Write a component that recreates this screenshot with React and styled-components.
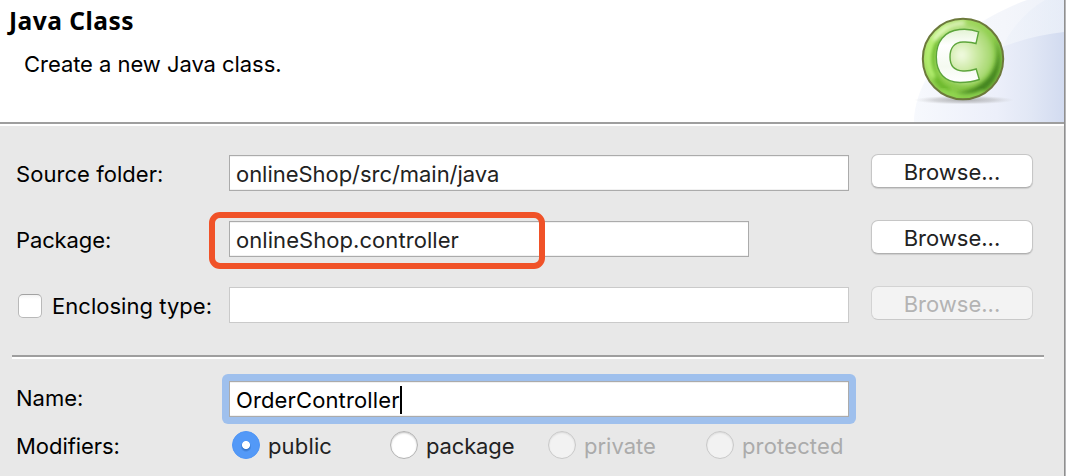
import React from "react";
import styled, { createGlobalStyle, css } from "styled-components";

const Global = createGlobalStyle`
  * { box-sizing: border-box; }
  body { margin: 0; background: #e8e8e8; overflow: hidden; }
`;

const Dialog = styled.main`
  width: 1066px;
  height: 476px;
  display: grid;
  grid-template-rows: 126px 229px 4px 117px;
  grid-template-columns: 1064px 2px;
  background: #e8e8e8;
  font-family: Inter, "Liberation Sans", sans-serif;
  font-size: 22px;
  line-height: 28px;
  color: #000;
`;

const WindowEdge = styled.div`
  grid-column: 2;
  grid-row: 1 / -1;
  background: linear-gradient(90deg, #8f8f8f 50%, #b7b7b9 50%);
`;

const Header = styled.header`
  display: flex;
  justify-content: space-between;
  background: #fff;
  border-bottom: 2px solid #fff;
  box-shadow: inset 0 -2px #9e9e9e;
`;

const Headings = styled.div`
  padding: 7px 0 0 8px;
`;

const Text = styled.span`
  display: block;
  white-space: nowrap;
  letter-spacing: ${(p) => p.$track || 0}px;
`;

const Title = styled.h1`
  margin: 0 0 0 1px;
  font: bold 24.5px/28px "Noto Sans", sans-serif;
  letter-spacing: 0.5px;
`;

const Subtitle = styled(Text)`
  margin: 15px 0 0 16px;
`;

const Banner = styled.svg`
  display: block;
  width: 160px;
  height: 122px;
`;

const Fields = styled.section`
  padding: 28px 31px 0 16px;
  display: grid;
  grid-template-columns: 213px 620px 162px;
  grid-auto-rows: 38px;
  row-gap: 28px;
  justify-content: start;
`;

const Label = styled.label`
  display: flex;
  align-items: center;
  gap: 10px;
  padding-top: 2px;
  height: 38px;
`;

const CheckBox = styled.span`
  width: 24px;
  height: 24px;
  margin-left: 2px;
  border-radius: 5px;
  border: 1px solid #b9b9b9;
  border-top-color: #a2a2a2;
  background: linear-gradient(#f3f3f3, #fff 4px);
`;

const Input = styled.div`
  display: flex;
  align-items: center;
  width: ${(p) => p.$width || 620}px;
  height: 36px;
  margin-top: 1px;
  padding: 1px 0 0 6px;
  border: 1px solid ${(p) => (p.$disabled ? "#cacaca" : "#ababab")};
  background: #fff;
  color: ${(p) => (p.$focused ? "#000" : "#222")};
  ${(p) => !p.$disabled && css`box-shadow: inset 0 1px #f1f1f1, inset 0 -1px #f1f1f1;`}
`;

const FocusRing = styled.div`
  width: 634px;
  height: 50px;
  padding: 7px;
  border-radius: 6px;
  background: #9fc0ed;
  ${Input} {
    margin: 0;
  }
`;

const Caret = styled.span`
  width: 2px;
  height: 28px;
  background: #000;
`;

const Highlighted = styled.div`
  position: relative;
`;

const Highlight = styled.span`
  position: absolute;
  left: -20px;
  top: -8px;
  width: 336px;
  height: 57px;
  border: 6px solid #f05228;
  border-radius: 11px;
`;

const Button = styled.button`
  justify-self: end;
  margin: 0 -22px 0 0;
  width: 162px;
  height: 34px;
  padding: 1px 0 0;
  display: flex;
  align-items: center;
  justify-content: center;
  border: 1px solid #c6c6c6;
  border-bottom-color: #b0b0b0;
  border-radius: 7px;
  background: #fff;
  box-shadow: 0 1px 1px rgba(0, 0, 0, 0.12);
  font: inherit;
  color: #222;
  &:disabled {
    background: #f3f3f3;
    color: #b3b3b3;
    border-color: #d3d3d3;
    border-bottom-color: #c9c9c9;
    box-shadow: none;
  }
`;

const Rule = styled.div`
  margin: 0 20px 0 12px;
  background: linear-gradient(#9e9e9e 50%, #fff 50%);
`;

const Details = styled.section`
  display: grid;
  grid-template-columns: 206px 634px;
  grid-template-rows: 50px 42px;
  padding: 15px 0 0 16px;
`;

const DetailLabel = styled(Text)`
  align-self: center;
  padding: ${(p) => p.$drop || 0}px 0 ${(p) => p.$lift || 0}px;
`;

const Radios = styled.div`
  display: grid;
  grid-template-columns: repeat(4, 158px);
  align-items: center;
  padding-left: 10px;
`;

const Option = styled.label`
  display: flex;
  align-items: center;
  gap: 8px;
  color: ${(p) => (p.$disabled ? "#ababab" : "#222")};
  ${Text} {
    padding-top: 2px;
  }
`;

const Circle = styled.span`
  width: 28px;
  height: 28px;
  flex: none;
  border-radius: 50%;
  border: 1px solid ${(p) => (p.$disabled ? "#c9c9c9" : "#b3b3b3")};
  background: ${(p) => (p.$disabled ? "#f2f2f2" : "#fff")};
  box-shadow: inset 0 1px 2px rgba(0, 0, 0, ${(p) => (p.$disabled ? 0.1 : 0.24)});
  ${(p) => p.$checked && css`
    border-color: #4f95f5;
    background: radial-gradient(circle at 50% 50%, #fff 0 3.6px, transparent 4.4px),
      radial-gradient(circle at 50% 56%, #3878ce 0 3.5px, transparent 5.5px), #5399f7;
    box-shadow: none;
  `}
`;

function ClassBanner() {
  return (
    <Banner viewBox="904 0 160 122" aria-hidden="true">
      <defs>
        <linearGradient id="outer" gradientUnits="userSpaceOnUse" x1="914" x2="1064" y1="0" y2="0">
          <stop offset="0" stopColor="#f7f9fd" />
          <stop offset=".6" stopColor="#f4f6fb" />
          <stop offset="1" stopColor="#edf1f9" />
        </linearGradient>
        <linearGradient id="mid" gradientUnits="userSpaceOnUse" x1="1000" x2="1064" y1="0" y2="0">
          <stop offset="0" stopColor="#eff3fa" />
          <stop offset="1" stopColor="#e2e9f6" />
        </linearGradient>
        <linearGradient id="inner" gradientUnits="userSpaceOnUse" x1="914" x2="1064" y1="0" y2="0">
          <stop offset="0" stopColor="#f7f9fd" />
          <stop offset=".55" stopColor="#eceffa" />
          <stop offset=".78" stopColor="#e1e7f5" />
          <stop offset="1" stopColor="#d2dbf0" />
        </linearGradient>
        <linearGradient id="ball" x1="0" y1="0" x2="1" y2="1">
          <stop offset="0" stopColor="#daf4b0" />
          <stop offset=".22" stopColor="#a5db62" />
          <stop offset=".6" stopColor="#8bcb4b" />
          <stop offset="1" stopColor="#76b93a" />
        </linearGradient>
        <radialGradient id="glow" cx=".42" cy=".5" r=".58">
          <stop offset="0" stopColor="#f4fce6" />
          <stop offset=".42" stopColor="#d0ebaa" />
          <stop offset="1" stopColor="#a0d566" />
        </radialGradient>
        <linearGradient id="letter" x1="0" y1="0" x2="0" y2="1">
          <stop offset="0" stopColor="#e3f3d4" />
          <stop offset=".3" stopColor="#fff" />
          <stop offset=".7" stopColor="#f5faf0" />
          <stop offset="1" stopColor="#fff" />
        </linearGradient>
        <radialGradient id="shadow">
          <stop offset="0" stopColor="#888" stopOpacity=".65" />
          <stop offset=".6" stopColor="#999" stopOpacity=".35" />
          <stop offset="1" stopColor="#bbb" stopOpacity="0" />
        </radialGradient>
        <filter id="soft" x="-30%" y="-30%" width="160%" height="160%">
          <feGaussianBlur stdDeviation="2" />
        </filter>
        <clipPath id="disc"><circle cx="963" cy="59" r="40" /></clipPath>
      </defs>
      <path d="M914 122C915 70 965 22 1027 0H1064V122Z" fill="url(#outer)" />
      <path d="M1000 52C1010 29 1025 12 1045 0H1064V122H1000Z" fill="url(#mid)" opacity=".6" />
      <path d="M914 122C915 106 919 94 925 84C958 68 1004 38 1064 32V122Z" fill="url(#inner)" />
      <ellipse cx="964" cy="100" rx="50" ry="4.5" fill="url(#shadow)" />
      <circle cx="963" cy="59" r="40.2" fill="url(#ball)" />
      <g clipPath="url(#disc)">
        <path d="M995 38C1003 66 988 89 955 94C993 103 1009 66 995 38Z" fill="#3f811f" filter="url(#soft)" />
        <path d="M941 37C925 57 932 83 950 91" fill="none" stroke="#66b528" strokeWidth="5" filter="url(#soft)" />
        <path d="M934 78C922 58 930 34 948 26" fill="none" stroke="#bcf578" strokeWidth="5" filter="url(#soft)" />
        <ellipse cx="966" cy="55" rx="28" ry="30" fill="url(#glow)" filter="url(#soft)" />
        <path d="M934 40Q946 23 965 23" fill="none" stroke="#f1fbd9" strokeWidth="3.5" filter="url(#soft)" />
        <path d="M941 90Q962 102 984 92" fill="none" stroke="#95dc55" strokeWidth="4" filter="url(#soft)" />
      </g>
      <circle cx="963" cy="59" r="40.2" fill="none" stroke="#6c793b" strokeWidth="2" />
      <path
        d="M978.6 31.8C973 29.6 966 28.8 959.500 29.5C944 31 936.300 42 936.300 57C936.300 73 945 82.500 960 82.500C967 82.500 974 81.500 979.300 79.500L976.200 69C971.500 70.600 967 71.300 963 71C954 70.500 950 65 950 57C950 48 954.500 42.300 963 42C968 41.800 972 42 976 43.500Z"
        fill="url(#letter)"
        stroke="#5da53b"
        strokeWidth="1.4"
      />
    </Banner>
  );
}

const options = [
  { name: "public", track: 0.15, checked: true },
  { name: "package", track: -0.15 },
  { name: "private", track: 0, disabled: true },
  { name: "protected", track: 0.15, disabled: true },
];

export default function App() {
  return (
    <>
      <Global />
      <Dialog>
        <Header>
          <Headings>
            <Title>Java Class</Title>
            <Subtitle $track={-0.05}>Create a new Java class.</Subtitle>
          </Headings>
          <ClassBanner />
        </Header>
        <WindowEdge />
        <Fields>
          <Label><Text $track={0.05}>Source folder:</Text></Label>
          <Input><Text $track={-0.04}>onlineShop/src/main/java</Text></Input>
          <Button><Text>Browse...</Text></Button>

          <Label><Text $track={-0.12}>Package:</Text></Label>
          <Highlighted>
            <Input $width={520}><Text $track={0.06}>onlineShop.controller</Text></Input>
            <Highlight />
          </Highlighted>
          <Button><Text>Browse...</Text></Button>

          <Label><CheckBox /><Text $track={0.03}>Enclosing type:</Text></Label>
          <Input $disabled />
          <Button disabled><Text>Browse...</Text></Button>
        </Fields>
        <Rule />
        <Details>
          <DetailLabel $lift={2}>Name:</DetailLabel>
          <FocusRing>
            <Input $focused><Text $track={0.13}>OrderController</Text><Caret /></Input>
          </FocusRing>
          <DetailLabel $drop={2} $track={-0.05}>Modifiers:</DetailLabel>
          <Radios>
            {options.map((o) => (
              <Option key={o.name} $disabled={o.disabled}>
                <Circle $checked={o.checked} $disabled={o.disabled} />
                <Text $track={o.track}>{o.name}</Text>
              </Option>
            ))}
          </Radios>
        </Details>
      </Dialog>
    </>
  );
}
